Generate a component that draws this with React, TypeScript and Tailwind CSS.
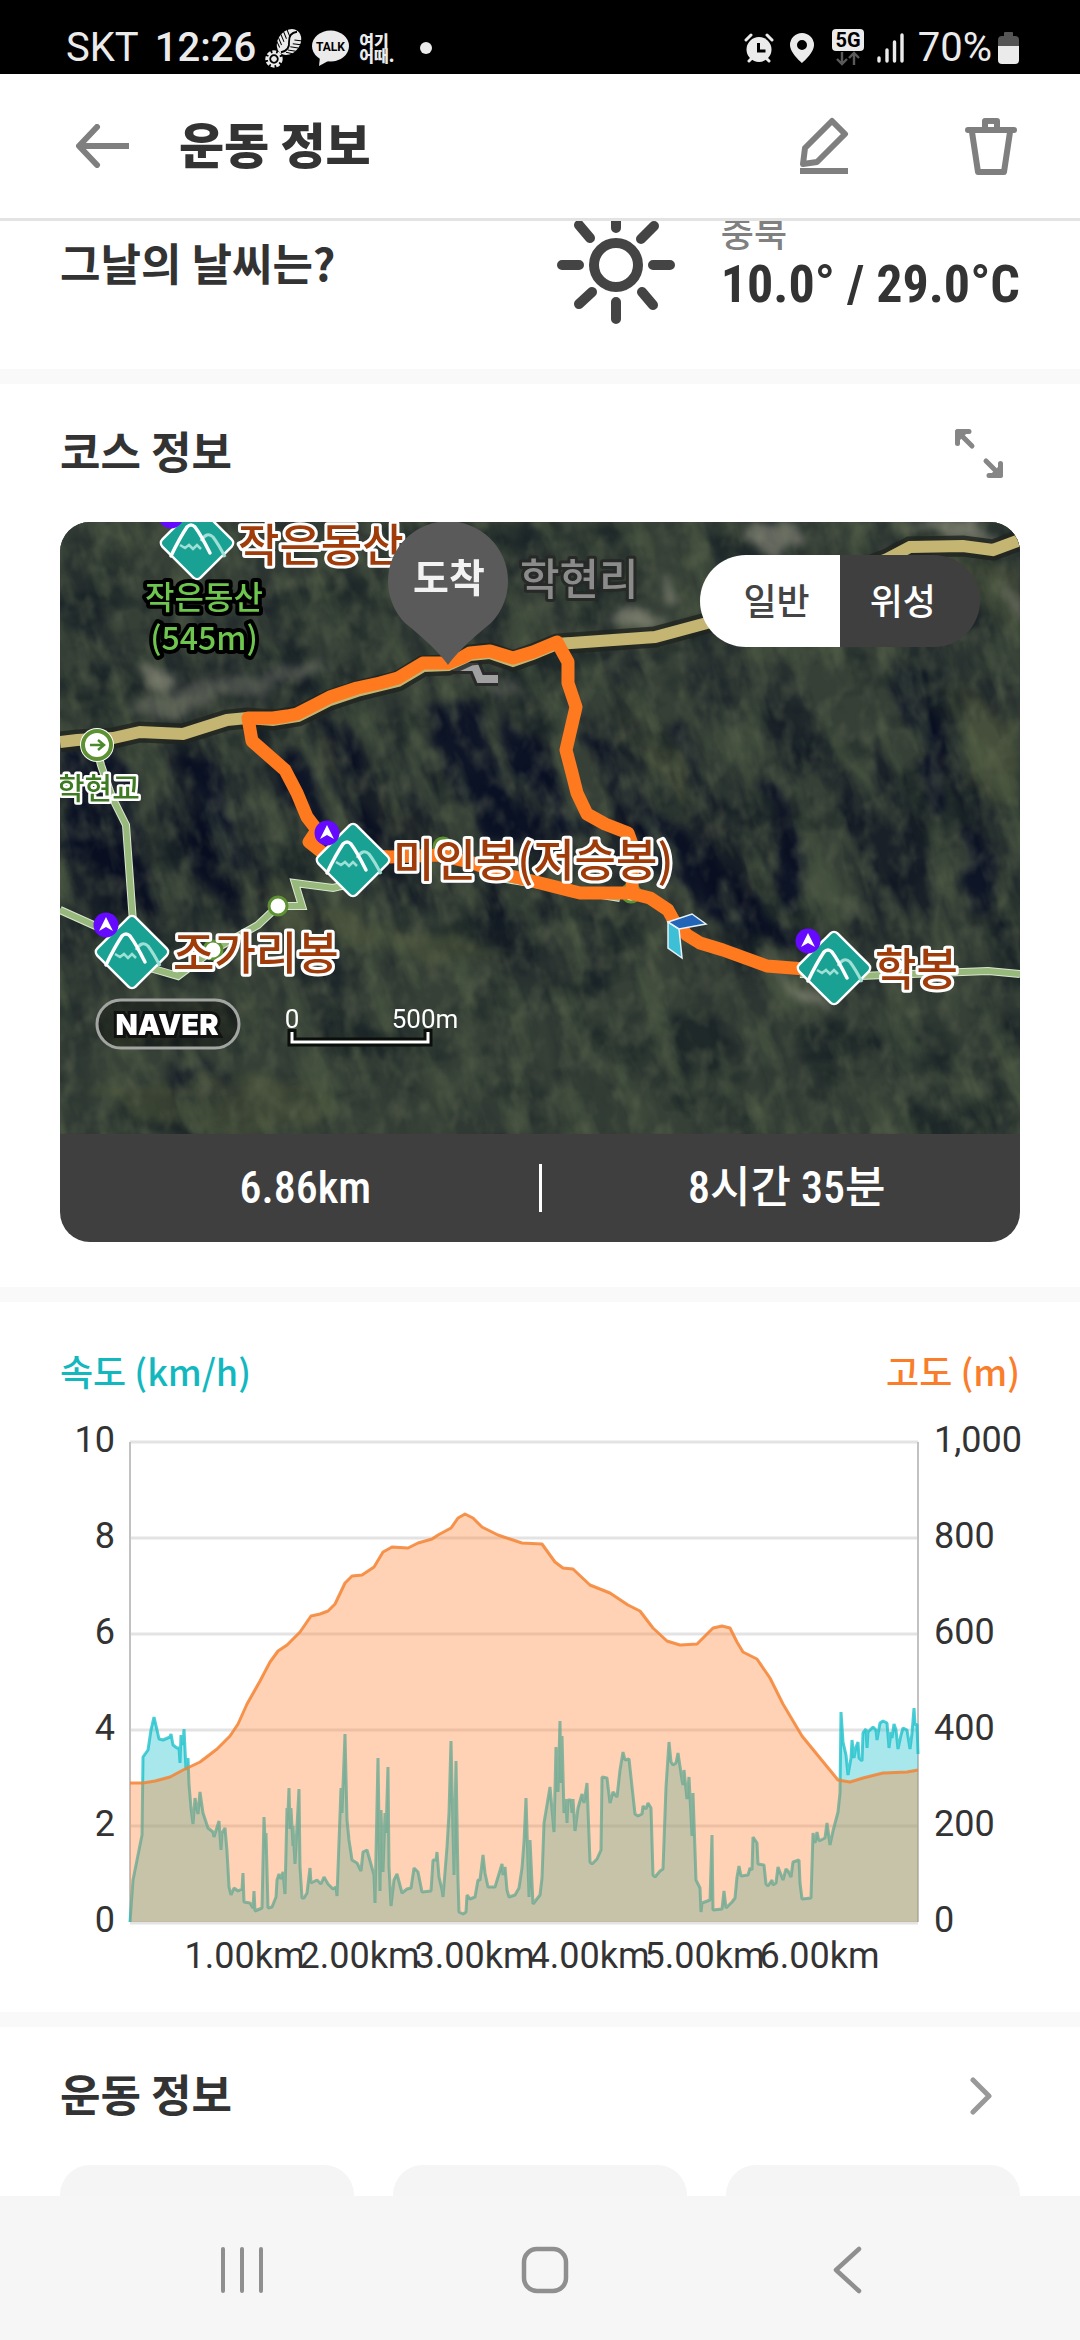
import React from "react";

const KR = "font-['Noto_Sans_CJK_KR',sans-serif]";
const ROBOTO = "font-['Roboto','Noto_Sans_CJK_KR',sans-serif]";
const NARROW = "font-['Roboto_Condensed','Liberation_Sans_Narrow','Noto_Sans_CJK_KR',sans-serif]";
const NARROW_BOLD = "font-['Liberation_Sans_Narrow','Roboto_Condensed','Noto_Sans_CJK_KR',sans-serif]";

const elevation =
  "0,341 13,341 25,339 40,335 53,328 70,320 87,307 100,294 108,282 117,262 130,239 140,220 148,209 157,203 170,190 181,174 190,172 198,169 205,162 215,141 222,134 232,133 244,125 253,110 262,105 278,106 288,101 302,97 308,93 321,86 328,76 335,72 343,76 352,85 368,93 380,97 392,101 412,102 425,120 433,126 443,127 460,143 480,151 498,163 510,169 523,186 537,199 550,203 567,202 583,186 592,184 600,186 607,200 613,210 627,217 640,236 653,262 672,294 690,316 708,338 720,340 733,336 753,331 777,330 788,328";

const speed =
  "0,480 3,438 7,418 12,393 13,315 18,308 21,288 24,275 27,288 29,297 33,298 40,295 41,292 43,303 47,306 49,306 50,321 51,293 53,303 54,287 56,328 58,316 59,342 61,366 63,382 65,356 68,372 70,350 73,371 78,386 83,390 84,395 89,379 91,408 92,391 95,386 97,409 99,445 101,453 104,446 108,449 112,447 113,431 114,460 120,461 123,466 124,449 125,469 132,466 134,375 135,398 136,391 138,466 142,465 146,455 147,438 149,432 151,437 153,430 155,452 157,366 158,371 159,346 160,387 161,366 163,404 163,384 165,422 169,347 170,425 172,456 174,456 177,451 180,426 181,441 187,438 191,442 194,435 198,442 203,447 206,445 207,454 211,346 212,371 215,292 217,378 219,398 222,418 227,421 231,429 233,410 237,408 244,433 245,461 248,316 250,449 251,368 253,430 255,371 256,391 258,325 259,425 261,464 264,438 267,432 272,451 277,447 281,446 284,426 288,430 292,450 301,449 303,418 306,418 307,410 309,435 312,448 313,455 317,405 319,371 321,299 324,433 326,319 328,438 329,470 333,472 336,470 337,453 340,457 345,455 348,438 350,438 353,413 355,431 358,445 365,445 372,422 373,433 375,425 377,448 379,455 385,453 389,446 392,426 394,400 396,356 398,422 399,455 400,398 403,462 410,453 412,436 414,381 420,345 424,390 426,305 428,350 430,279 431,341 432,294 434,371 436,357 437,381 438,358 441,358 442,371 443,357 445,389 448,366 452,352 454,361 457,341 460,420 462,422 467,417 471,408 472,335 477,336 480,361 483,350 487,355 490,328 493,310 495,318 499,317 505,372 508,374 512,372 513,364 516,367 518,361 521,366 523,433 525,435 530,429 533,427 536,345 539,300 541,320 543,323 546,321 548,311 552,338 553,343 554,328 557,357 559,335 562,394 563,351 566,438 570,446 571,470 572,461 580,458 582,393 583,468 592,467 594,449 596,466 602,460 605,456 607,435 609,424 611,434 618,433 620,426 622,428 623,395 627,401 628,422 634,423 636,442 638,444 642,438 643,443 646,441 648,425 653,438 656,427 658,429 661,435 663,420 669,418 670,441 672,457 681,456 683,391 685,401 687,390 689,399 695,396 697,381 700,403 703,389 708,370 710,351 711,270 713,300 716,313 718,333 721,316 722,298 724,316 726,305 728,300 729,316 732,319 733,291 736,287 737,306 738,290 743,285 746,288 747,298 750,281 753,279 757,281 759,306 761,290 762,296 764,282 766,288 768,307 771,293 773,286 777,288 780,307 782,291 784,266 785,283 787,282 788,312";

function StatusBar() {
  return (
    <header className={`${ROBOTO} flex h-[74px] shrink-0 items-center bg-black pl-[66px] pr-[61px] pt-[22px] text-[40px] leading-[48px] text-[#ebebeb]`}>
      <span>SKT</span>
      <span className="ml-4 font-medium">12:26</span>
      <svg className="ml-2 h-10 w-10 shrink-0" viewBox="0 0 40 40" fill="none" stroke="#ebebeb">
        <g transform="rotate(38 25 14)">
          <ellipse cx="25" cy="14" rx="11" ry="14" fill="#ebebeb" stroke="none" />
          <path d="M15 5l7 4M14 9l7 4M14 13l7 4M14 17l7 4M15 21l6 3M35 5l-7 4M36 9l-7 4M36 13l-7 4M36 17l-7 4M35 21l-6 3" stroke="#000" strokeWidth="1" />
          <path d="M25 1q-6 6 0 13 6 6 0 13" stroke="#000" strokeWidth="1.800" />
        </g>
        <circle cx="10" cy="31" r="7" strokeWidth="3.400" strokeDasharray="3.600 1.600" />
        <circle cx="10" cy="31" r="5.500" strokeWidth="1.600" />
        <circle cx="10" cy="31" r="2.400" fill="#ebebeb" />
      </svg>
      <svg className="ml-2 h-10 w-[37px] shrink-0" viewBox="0 0 37 40">
        <ellipse cx="18.500" cy="18" rx="18.500" ry="15.500" fill="#ebebeb" />
        <path d="M8 29l-1 9 11-6z" fill="#ebebeb" />
        <text x="18.500" y="23" textAnchor="middle" fontFamily="Roboto" fontWeight="700" fontSize="12" fill="#000">TALK</text>
      </svg>
      <span className="ml-[10px] flex flex-col font-['Noto_Sans_CJK_KR',sans-serif] text-[16px] font-black leading-[15px]">
        <span>여기</span>
        <span>어때.</span>
      </span>
      <span className="ml-[26px] h-3 w-3 rounded-full bg-[#ebebeb]" />
      <svg className="ml-auto h-[30px] w-[30px] shrink-0" viewBox="0 0 30 30">
        <circle cx="15" cy="16.500" r="12.500" fill="#ebebeb" />
        <path d="M2 7l5-5M28 7l-5-5M5 28l4-4M25 28l-4-4" stroke="#ebebeb" strokeWidth="3" strokeLinecap="round" />
        <path d="M14.500 10v8h7" stroke="#000" strokeWidth="3" fill="none" />
      </svg>
      <svg className="ml-4 h-[30px] w-6 shrink-0" viewBox="0 0 24 30">
        <path fillRule="evenodd" fill="#ebebeb" d="M12 0a12 12 0 0 1 12 12c0 8-12 18-12 18S0 20 0 12A12 12 0 0 1 12 0zm0 7a5 5 0 1 0 0 10 5 5 0 0 0 0-10z" />
      </svg>
      <svg className="ml-[18px] h-[38px] w-8 shrink-0" viewBox="0 0 32 38">
        <rect width="32" height="22" rx="4" fill="#ebebeb" />
        <text x="16" y="18" textAnchor="middle" fontFamily="Roboto" fontWeight="700" fontSize="20" fill="#000">5G</text>
        <path d="M10 23v12M5 30l5 5 5-5M22 36V24M17 29l5-5 5 5" stroke="#5a5a5a" strokeWidth="2.400" fill="none" />
      </svg>
      <svg className="ml-[13px] h-[30px] w-[27px] shrink-0" viewBox="0 0 27 30" stroke="#ebebeb" strokeWidth="3.400" strokeLinecap="round">
        <path d="M2 25v3M10 17v11M17.500 9v19M25 2v26" />
      </svg>
      <span className="ml-[14px]">70%</span>
      <svg className="ml-[6px] h-8 w-[21px] shrink-0" viewBox="0 0 21 32">
        <path d="M6 1q0-1 1-1h7q1 0 1 1v3h2q4 0 4 4v6H0V8q0-4 4-4h2z" fill="#555" />
        <path d="M0 14h21v14q0 4-4 4H4q-4 0-4-4z" fill="#ebebeb" />
      </svg>
    </header>
  );
}

function TitleBar() {
  return (
    <div className={`${KR} flex h-[147px] shrink-0 items-center border-b-[3px] border-[#e3e3e3] bg-white px-[60px]`}>
      <button aria-label="뒤로" className="ml-4 flex h-[54px] w-[54px] items-center">
        <svg className="h-11 w-[54px]" viewBox="0 0 54 44" fill="none" stroke="#7f7f7f" strokeWidth="6" strokeLinejoin="round">
          <path d="M53 22H4" />
          <path d="M21 3L3 22l18 19" strokeLinecap="round" />
        </svg>
      </button>
      <h1 className="ml-[49px] pb-[6px] text-[49px] font-black leading-[60px] text-[#333]">운동 정보</h1>
      <button aria-label="수정" className="ml-auto">
        <svg className="h-[58px] w-[50px]" viewBox="0 0 50 58" fill="none" stroke="#7f7f7f" strokeWidth="6" strokeLinejoin="round">
          <path d="M33 4L46 17 18 45 4 47 6 31z" />
          <path d="M1 54h48" />
        </svg>
      </button>
      <button aria-label="삭제" className="ml-[116px] mr-[3px]">
        <svg className="h-[58px] w-[52px]" viewBox="0 0 52 58" fill="none" stroke="#7f7f7f" strokeWidth="6" strokeLinejoin="round" strokeLinecap="round">
          <path d="M3 13h46M20 12V4h12v8M7 15l6 40h26l6-40" />
        </svg>
      </button>
    </div>
  );
}

function Weather() {
  return (
    <section className={`${KR} -mt-[60px] flex h-[208px] shrink-0 items-center px-[60px]`}>
      <h2 className="pb-[6px] text-[44px] font-bold leading-[52px] text-[#333]">그날의 날씨는?</h2>
      <svg className="ml-auto h-[118px] w-[118px]" viewBox="0 0 118 118" fill="none" stroke="#444" strokeWidth="10" strokeLinecap="round">
        <circle cx="59" cy="59" r="22" />
        <path d="M5 59h17M96 59h17M59 5v17M59 96v17M22 19l11 13M97 20L84 33M22 98l13-12M96 99L85 86" />
      </svg>
      <div className="ml-[46px] flex flex-col">
        <span className="text-[36px] font-medium leading-[40px] text-[#808080]">충북</span>
        <span className={`${NARROW_BOLD} text-[52px] font-bold leading-[68px] text-[#333]`}>10.0° / 29.0°C</span>
      </div>
    </section>
  );
}

function Peak({ x, y }: { x: number; y: number }) {
  return (
    <g transform={`translate(${x} ${y})`}>
      <rect x="-27" y="-27" width="54" height="54" rx="5" transform="rotate(45)" fill="#19a294" stroke="#fff" strokeWidth="2.500" />
      <path d="M4-2Q10-12 16-6 22 2 28 14" fill="none" stroke="#9fe0d6" strokeWidth="3" />
      <path d="M-17 2l5 3 4-3 4 4 4-4 4 4" fill="none" stroke="#9fe0d6" strokeWidth="2.500" />
      <path d="M-26 13Q-18-4-10-16-6-20-2-16 4-8 13 10" fill="none" stroke="#fff" strokeWidth="3.500" strokeLinecap="round" />
      <circle cx="-26" cy="-27" r="12.500" fill="#6609ff" />
      <path d="M-26-35l7 14-7-4-7 4z" fill="#fff" />
    </g>
  );
}

function Terrain() {
  return (
    <>
      <defs>
        <filter id="ridges" x="0" y="0" width="100%" height="100%" colorInterpolationFilters="sRGB">
          <feTurbulence type="fractalNoise" baseFrequency="0.024 0.006" numOctaves="4" seed="11" />
          <feColorMatrix values="0 0 0 0 0.03  0 0 0 0 0.05  0 0 0 0 0.12  5 0 0 0 -2.2" />
        </filter>
        <filter id="light" x="0" y="0" width="100%" height="100%" colorInterpolationFilters="sRGB">
          <feTurbulence type="fractalNoise" baseFrequency="0.035 0.012" numOctaves="4" seed="4" />
          <feColorMatrix values="0 0 0 0 0.36  0 0 0 0 0.42  0 0 0 0 0.30  0 3.4 0 0 -1.6" />
        </filter>
        <filter id="patches" x="0" y="0" width="100%" height="100%" colorInterpolationFilters="sRGB">
          <feTurbulence type="fractalNoise" baseFrequency="0.012 0.016" numOctaves="4" seed="23" />
          <feColorMatrix values="0 0 0 0 0.12  0 0 0 0 0.16  0 0 0 0 0.16  4 0 0 0 -1.9" />
        </filter>
        <filter id="grain" x="0" y="0" width="100%" height="100%" colorInterpolationFilters="sRGB">
          <feTurbulence type="fractalNoise" baseFrequency="0.060 0.040" numOctaves="3" seed="8" />
          <feColorMatrix values="0 0 0 0 0.40  0 0 0 0 0.43  0 0 0 0 0.33  0 0 2 0 -0.9" />
          <feGaussianBlur stdDeviation="1" />
        </filter>
        <filter id="rough" x="-20%" y="-20%" width="140%" height="140%" colorInterpolationFilters="sRGB">
          <feTurbulence type="fractalNoise" baseFrequency="0.03 0.02" numOctaves="3" seed="3" />
          <feDisplacementMap in="SourceGraphic" scale="34" xChannelSelector="R" yChannelSelector="G" />
          <feGaussianBlur stdDeviation="4" />
        </filter>
        <linearGradient id="bandFade" x1="0" y1="0" x2="0" y2="1">
          <stop offset="0" stopColor="#fff" stopOpacity="0.300" />
          <stop offset="0.300" stopColor="#fff" stopOpacity="0.600" />
          <stop offset="0.420" stopColor="#fff" />
          <stop offset="0.620" stopColor="#fff" />
          <stop offset="0.780" stopColor="#fff" stopOpacity="0.300" />
          <stop offset="1" stopColor="#fff" stopOpacity="0.200" />
        </linearGradient>
        <mask id="band">
          <rect width="960" height="612" fill="url(#bandFade)" />
        </mask>
      </defs>
      <rect width="960" height="612" fill="#364037" />
      <rect width="960" height="612" filter="url(#patches)" />
      <g filter="url(#rough)" fill="#080d24" opacity="0.850">
        <path d="M40 210L70 240 100 390 60 380 10 320 0 230z" />
        <path d="M120 225l30 5 40 120-14 36-36-30z" />
        <path d="M210 220l26 20 44 80-20 10z" />
        <path d="M255 200l20 0 60 110-16 16-50-60z" />
        <path d="M370 170l40 10 60 110 20 40-60-10-50-70z" />
        <path d="M440 190l40 30 30 60 40 40-50 0-40-60z" />
        <path d="M520 210l30 10 40 70 60 40 90 90 20 26-110-50-60-50-40-70z" />
        <path d="M610 200l24 20 60 150 10 50-50-60z" />
        <path d="M700 260l20 10 30 90-16 30z" />
        <path d="M830 130l40 30 20 120-20 10z" />
        <path d="M900 300l40 30-10 60-26-30z" />
        <path d="M100 540l60 10 30 20-70 12z" opacity="0.600" />
      </g>
      <g filter="url(#rough)" fill="#5a6340" opacity="0.450">
        <path d="M250 200l40 50 60 40 50 50-30 4-60-50-50-50z" />
        <path d="M560 160l40 50 60 80 40 80-14 10-60-100-70-80z" />
        <path d="M890 160l70 40v80l-50-10z" />
        <path d="M20 570l200-20 60 40-120 30z" />
        <path d="M150 340l60 20 100 40 140 30-60 14-180-40z" />
        <path d="M860 20l100 30v60l-50-30z" />
      </g>
      <g mask="url(#band)">
        <g transform="rotate(-16 480 306)">
          <rect x="-150" y="-180" width="1260" height="970" filter="url(#ridges)" opacity="0.600" />
        </g>
      </g>
      <g transform="rotate(-20 480 306)">
        <rect x="-150" y="-180" width="1260" height="970" filter="url(#light)" opacity="0.400" />
      </g>
      <rect width="960" height="612" filter="url(#grain)" opacity="0.500" />
      <g filter="url(#rough)" fill="#a09f8c" opacity="0.550">
        <path d="M60 190l60-26 80-10 60-20 10 12-80 30-90 20z" opacity="0.600" />
        <path d="M690 0l50 0 10 28-30 12-34-16z" />
        <path d="M830 0l80 0 40 24-70-8z" />
        <path d="M555 80l30 6 26 14-20 8-40-8z" />
        <path d="M84 150l24-6 4 20-24 8z" />
        <path d="M600 50l14 14 6 16-14-4z" />
        <path d="M700 440l60 30 16 14-40-14z" />
        <path d="M936 60l24 10v30z" />
        <path d="M400 150l50 20 24 14-40-8z" opacity="0.600" />
      </g>
    </>
  );
}

const routeA =
  "M388 141L363 141 338 156 320 161 297 166 270 175 237 192 227 194 213 196 188 196 192 219 225 248 237 271 247 295 257 308 249 320 263 331 330 335 380 333 413 341 447 353 480 361 520 371 570 371 590 376 608 388 614 399 627 413 640 421 663 428 707 444 745 447";
const routeB =
  "M388 141L403 135 410 131 430 129 453 136 473 130 497 120 508 140 508 161 516 185 506 228 512 251 517 271 527 292 545 302 568 311 573 325 572 371";
const road =
  "M0 220L17 218 53 216 80 210 123 212 167 198 187 196 213 198 238 194 270 178 297 169 338 159 363 144 388 143 410 133 430 131 453 139 473 132 497 122 595 115 647 101 740 70 827 37 850 25 903 24 933 28 960 18";

const tags = [
  { t: "작은동산", x: 178, y: 40 },
  { t: "미인봉(저승봉)", x: 333, y: 355 },
  { t: "조가리봉", x: 113, y: 448 },
  { t: "학봉", x: 815, y: 464 },
];

function CourseMap() {
  return (
    <svg className="block aspect-[960/612] w-full" viewBox="0 0 960 612" fontFamily="'Noto Sans CJK KR', sans-serif" role="img" aria-label="코스 지도">
      <Terrain />
      <g fill="none">
        <path d="M393 145H415L420 157H438" stroke="#2a2a2a" strokeWidth="14" />
        <path d="M393 145H415L420 157H438" stroke="#a0a0a0" strokeWidth="8" />
        <path d={road} stroke="#20241f" strokeOpacity="0.800" strokeWidth="21" />
        <path d={road} stroke="#c4b573" strokeWidth="12" />
        {["#dbe6d0", "#98b97c"].map((c, i) => (
          <path
            key={c}
            stroke={c}
            strokeWidth={i ? 6 : 8}
            d="M39 235L41 243 52 275 66 303 73 400M0 388L40 406M90 446L118 454 150 430 198 403 218 384 242 384 235 361 273 366 290 362M440 356L560 376M740 452L800 454 928 449 960 452"
          />
        ))}
      </g>
      {[[218, 384], [153, 428], [383, 325], [571, 371]].map(([cx, cy]) => (
        <circle key={cx} cx={cx} cy={cy} r="9" fill="#fff" stroke="#5d9132" strokeWidth="3" />
      ))}
      <g fill="none" stroke="#ff7a1f" strokeWidth="13" strokeLinejoin="round" strokeLinecap="round">
        <path d={routeA} />
        <path d={routeB} />
      </g>
      <g stroke="#e8f2f8" strokeWidth="1.500">
        <path d="M608 400L608 426 622 436 619 407z" fill="#3dbfd6" />
        <path d="M608 400L632 392 646 402 619 407z" fill="#2264b8" />
      </g>
      <circle cx="37" cy="223" r="17" fill="#fff" />
      <circle cx="37" cy="223" r="14" fill="none" stroke="#5d9132" strokeWidth="4" />
      <path d="M30 223h13M38 218l6 5-6 5" fill="none" stroke="#4b8a2a" strokeWidth="2.500" />
      <Peak x={137} y={21} />
      <Peak x={293} y={338} />
      <Peak x={72} y={430} />
      <Peak x={774} y={446} />
      <g fontSize="45" fontWeight="500" fill="#a03c0a" stroke="#fff" strokeWidth="6" strokeLinejoin="round" paintOrder="stroke">
        {tags.map((l) => (
          <text key={l.t} x={l.x} y={l.y}>{l.t}</text>
        ))}
      </g>
      <g fontSize="32" fill="#6fc64f" stroke="#000" strokeWidth="8" strokeLinejoin="round" paintOrder="stroke" textAnchor="middle" fontWeight="500">
        <text x="144" y="87">작은동산</text>
        <text x="144" y="128">(545m)</text>
      </g>
      <text x="-3" y="277" fontSize="30" fontWeight="500" fill="#3d7a22" stroke="#fff" strokeWidth="5" strokeLinejoin="round" paintOrder="stroke">학현교</text>
      <text x="460" y="73" fontSize="43" fontWeight="500" fill="#8b8b8b" stroke="#262926" strokeWidth="6" strokeLinejoin="round" paintOrder="stroke">학현리</text>
      <path d="M388 143Q376 126 345 101A60 60 0 1 1 431 101Q400 126 388 143z" fill="#5a5a5a" />
      <text x="389" y="70" fontSize="39" fontWeight="700" fill="#f2f2f2" textAnchor="middle">도착</text>
      <rect x="37" y="478" width="142" height="48" rx="24" fill="#000" fillOpacity="0.350" stroke="#a3a5a3" strokeWidth="3" />
      <text x="107" y="513" fontFamily="Inter" fontSize="29" fontWeight="900" fill="#fff" stroke="#111" strokeWidth="6" paintOrder="stroke" textAnchor="middle">NAVER</text>
      <path d="M232 507V520H368V507" fill="none" stroke="#0b0f0b" strokeWidth="9" />
      <path d="M232 510V520H368V510" fill="none" stroke="#fff" strokeWidth="3" />
      <g fontFamily="Roboto" fontSize="26" fill="#fff" textAnchor="middle">
        <text x="232" y="506">0</text>
        <text x="365" y="506">500m</text>
      </g>
    </svg>
  );
}

function Course() {
  return (
    <section className={`${KR} shrink-0 px-[60px] pb-[45px] pt-[41px]`}>
      <div className="flex items-center justify-between pr-[14px]">
        <h2 className="pb-[6px] text-[44px] font-bold leading-[50px] text-[#333]">코스 정보</h2>
        <button aria-label="지도 확대">
          <svg className="h-[56px] w-[54px]" viewBox="0 0 54 56" fill="none" stroke="#868686" strokeWidth="5" strokeLinejoin="round" strokeLinecap="round">
            <path d="M17 6.500H5.500v12M7 8l13 13M37 50.500h11.500v-12M47 49L34 36" />
            <path d="M5 6h10L5 16zM49 51H39l10-10z" fill="#868686" strokeWidth="3" />
          </svg>
        </button>
      </div>
      <div className="relative mt-[41px] overflow-hidden rounded-[30px] bg-[#3f3f3f]">
        <CourseMap />
        <div className="absolute right-10 top-[33px] flex overflow-hidden rounded-full text-[36px] font-medium leading-[88px]">
          <button className="bg-white pb-1 pl-11 pr-[30px] text-[#444]">일반</button>
          <button className="bg-[#3f3f3f] pb-1 pl-[30px] pr-11 text-white">위성</button>
        </div>
        <div className={`${NARROW} grid h-[108px] grid-cols-[1fr_3px_1fr] items-center text-[44px] font-medium text-white`}>
          <span className="pl-3 text-center">6.86km</span>
          <span className="h-12 bg-white" />
          <span className="pl-3 text-center">8시간 35분</span>
        </div>
      </div>
    </section>
  );
}

const leftTicks = ["10", "8", "6", "4", "2", "0"];
const rightTicks = ["1,000", "800", "600", "400", "200", "0"];
const kmTicks = ["1.00km", "2.00km", "3.00km", "4.00km", "5.00km", "6.00km"];

function Chart() {
  return (
    <section className={`${ROBOTO} shrink-0 px-[60px] pb-[38px] pt-11 text-[36px] leading-9 text-[#333]`}>
      <div className={`${KR} flex justify-between font-medium leading-[48px]`}>
        <span className="text-[#13b8bf]">속도 (km/h)</span>
        <span className="text-[#fa7d2b]">고도 (m)</span>
      </div>
      <div className="mt-7 flex">
        <div className="flex h-[516px] w-[70px] flex-col justify-between pr-[15px] text-right">
          {leftTicks.map((t) => (
            <span key={t}>{t}</span>
          ))}
        </div>
        <div className="min-w-0 flex-1 pt-5">
          <svg className="block h-[482px] w-full overflow-visible" viewBox="0 0 788 482" preserveAspectRatio="none">
            {[0, 96, 192, 288, 384, 481].map((y) => (
              <path key={y} d={`M0 ${y}H788`} stroke="#e3e3e3" strokeWidth="3" />
            ))}
            <path d="M0 0V480M788 0V480" stroke="#c2c2c2" strokeWidth="2" />
            <polygon points={`${speed} 788,480`} fill="#26c6d2" fillOpacity="0.400" />
            <polyline points={speed} fill="none" stroke="#12bdc8" strokeOpacity="0.750" strokeWidth="3" strokeLinejoin="bevel" />
            <polygon points={`0,480 ${elevation} 788,480`} fill="#ff7d2a" fillOpacity="0.350" />
            <polyline points={elevation} fill="none" stroke="#f58231" strokeOpacity="0.850" strokeWidth="3" strokeLinejoin="round" />
          </svg>
        </div>
        <div className="flex h-[516px] w-[102px] flex-col justify-between pl-4">
          {rightTicks.map((t) => (
            <span key={t}>{t}</span>
          ))}
        </div>
      </div>
      <div className="ml-[127px] mr-[143px] grid grid-cols-6">
        {kmTicks.map((t) => (
          <span key={t} className="flex justify-center whitespace-nowrap">{t}</span>
        ))}
      </div>
    </section>
  );
}

function Summary() {
  return (
    <section className={`${KR} shrink-0 px-[60px] pt-[41px]`}>
      <div className="flex items-center justify-between pr-7">
        <h2 className="pb-[6px] text-[44px] font-bold leading-[50px] text-[#333]">운동 정보</h2>
        <button aria-label="운동 정보 더보기">
          <svg className="h-[38px] w-[22px]" viewBox="0 0 22 38" fill="none" stroke="#999" strokeWidth="5" strokeLinecap="round" strokeLinejoin="round">
            <path d="M3 3l16 16L3 35" />
          </svg>
        </button>
      </div>
      <div className="mt-[41px] grid grid-cols-3 gap-[39px]">
        <div className="h-40 rounded-[30px] bg-[#f5f5f5]" />
        <div className="h-40 rounded-[30px] bg-[#f5f5f5]" />
        <div className="h-40 rounded-[30px] bg-[#f5f5f5]" />
      </div>
    </section>
  );
}

function NavBar() {
  return (
    <nav className="flex h-36 shrink-0 items-center justify-between bg-[#f6f6f6] pl-[218px] pr-[208px] pt-1">
      <button aria-label="최근 앱">
        <svg className="h-12 w-12" viewBox="0 0 48 48" stroke="#8f8f8f" strokeWidth="4" strokeLinecap="round">
          <path d="M5 3v42M24 3v42M43 3v42" />
        </svg>
      </button>
      <button aria-label="홈">
        <svg className="h-12 w-12" viewBox="0 0 48 48" fill="none" stroke="#8f8f8f" strokeWidth="4.500">
          <rect x="3" y="3" width="42" height="42" rx="13" />
        </svg>
      </button>
      <button aria-label="뒤로 가기">
        <svg className="h-12 w-12" viewBox="0 0 48 48" fill="none" stroke="#8f8f8f" strokeWidth="4.500" strokeLinecap="round" strokeLinejoin="round">
          <path d="M35 3L12 24l23 21" />
        </svg>
      </button>
    </nav>
  );
}

function Divider() {
  return <div className="h-[15px] shrink-0 bg-[#f9f9f9]" />;
}

export default function App() {
  return (
    <div className="flex h-screen flex-col bg-white">
      <StatusBar />
      <TitleBar />
      <main className="flex min-h-0 flex-1 flex-col overflow-hidden">
        <Weather />
        <Divider />
        <Course />
        <Divider />
        <Chart />
        <Divider />
        <Summary />
      </main>
      <NavBar />
    </div>
  );
}
